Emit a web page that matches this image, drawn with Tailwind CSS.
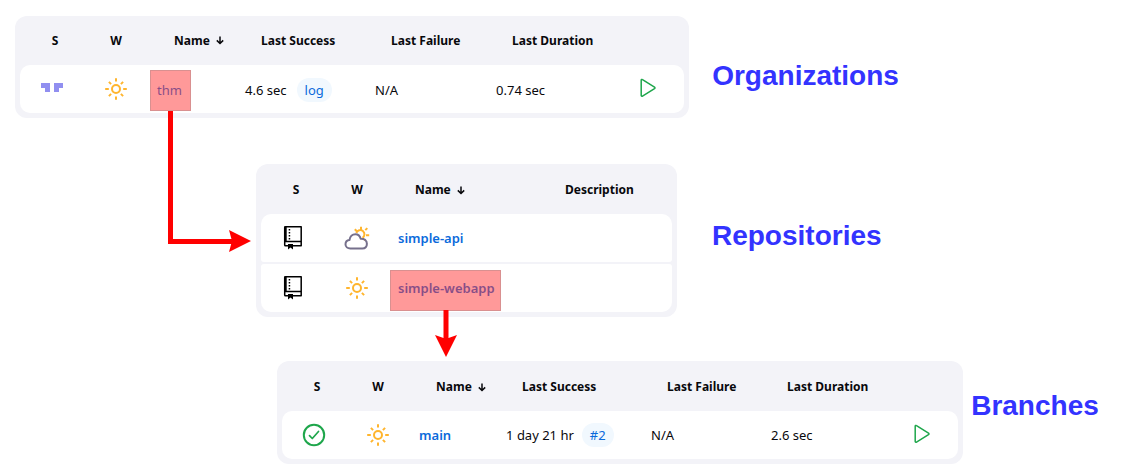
<!DOCTYPE html>
<html lang="en">
<head>
<meta charset="utf-8">
<title>Organizations, repositories and branches</title>
<script src="https://cdn.jsdelivr.net/npm/@tailwindcss/browser@4"></script>
</head>
<body class="bg-white font-['Noto_Sans',sans-serif] text-[13px] leading-5 text-[#08080c]">
<svg class="hidden" aria-hidden="true">
  <symbol id="sun" viewBox="0 0 24 24">
    <g fill="none" stroke="#ffb52e" stroke-width="2">
      <circle cx="12" cy="12" r="4"/>
      <path d="M12 1.2v3.3M12 19.5v3.3M1.2 12h3.6M19.2 12h3.6M4.9 4.9l2.2 2.2M16.9 16.9l2.2 2.2M19.1 4.9l-2.2 2.2M7.1 16.9l-2.2 2.2"/>
    </g>
  </symbol>
  <symbol id="cloud-sun" viewBox="0 0 26 24">
    <g fill="none" stroke-width="2">
      <path stroke="#ffb52e" d="M12.3 6.8a4.2 4.2 0 1 1 6.2 5M17 .8v3M21.3 4.1l2-2M22 9.3h3.2M10.8 3.2l1.8 1.8M21.3 14.2l-.8-.8"/>
      <path stroke="#76708c" stroke-linejoin="round" d="M6.3 22.500C3.500 22.500 1.500 20.600 1.500 18.300c0-2.300 1.700-3.900 4-4.200.4-3.600 2.900-5.900 5.900-5.900 2.700 0 4.600 1.800 5.300 4.600 3.800-.2 6.200 1.900 6.200 4.900 0 2.900-1.900 4.800-4.600 4.800z"/>
    </g>
  </symbol>
  <symbol id="repo" viewBox="0 0 20 26">
    <path fill="none" stroke="#000" stroke-width="1.500" stroke-linejoin="round" d="M2.500 1.700h15.700v19H2.500a.8.8 0 0 1-.8-.8V2.500a.8.8 0 0 1 .8-.8zM2 16.500h16.200"/>
    <path d="M1 1.500h2.700V17H1zM5.700 4h1.500v1.500H5.700zM5.700 7h1.500v1.500H5.700zM5.700 10h1.500v1.500H5.700zM5.700 13h1.500v1.500H5.700zM5 19h5v5.500L7.500 22.500 5 24.500z"/>
  </symbol>
  <symbol id="play" viewBox="0 0 16 20">
    <path fill="none" stroke="#1ea64b" stroke-width="1.500" stroke-linejoin="round" d="M1.200 2.200v15.200c0 .7.700 1.100 1.300.7l12-7.500c.6-.4.6-1 0-1.400l-12-7.600c-.6-.4-1.300 0-1.300.6z"/>
  </symbol>
  <symbol id="down" viewBox="0 0 8 9">
    <path fill="none" stroke="currentColor" stroke-width="1.500" d="M4 .5v7M.8 4.400L4 7.500l3.200-3.100"/>
  </symbol>
</svg>

<main class="relative flex min-w-[1040px] flex-col pt-4 pb-2">

  <section class="mb-[46px] flex items-start pl-[1.34%]">
    <div class="w-[60.9%] rounded-xl bg-[#f3f3f8] px-[5px] pb-[3px]">
      <table class="w-full table-fixed border-separate border-spacing-x-0 border-spacing-y-[2px] text-left">
        <colgroup><col class="w-[9.64%]"><col class="w-[9.64%]"><col class="w-[13.25%]"><col class="w-[19.58%]"><col class="w-[18.22%]"><col class="w-[18.83%]"><col class="w-[10.84%]"></colgroup>
        <thead>
          <tr class="h-[45px] text-xs">
            <th class="pl-[6px] text-center">S</th><th class="text-center">W</th>
            <th class="pl-[26px]"><button type="button" class="flex items-center gap-[6px]">Name <svg class="h-[9px] w-2"><use href="#down"/></svg></button></th>
            <th class="pl-[25px]">Last Success</th><th class="pl-[25px]">Last Failure</th><th class="pl-[25px]">Last Duration</th><th></th>
          </tr>
        </thead>
        <tbody>
          <tr class="h-12 *:bg-white">
            <td class="rounded-l-[10px]"><svg class="mx-auto mb-1 h-[9px] w-[22px]" viewBox="0 0 22 9" fill="#918ff0"><path d="M0 0h9v9H4V5H0zM13 0h9v5h-4v4h-5z"/></svg></td>
            <td><svg class="mx-auto size-6"><use href="#sun"/></svg></td>
            <td class="pt-[2px] pl-[9px]"><a href="#thm" class="relative inline-block text-[#0b6adb]">thm<span class="absolute -top-[10px] -right-[9px] -bottom-[11px] -left-[7px] border border-[#d99090] bg-[#ff3333]/50"></span></a></td>
            <td class="pt-[2px] pl-[9px]"><div class="flex items-center gap-[10px]">4.6 sec <a href="#log" class="rounded-full bg-[#f1f8fe] px-2 py-[2px] text-[#0b6adb]">log</a></div></td>
            <td class="pt-[2px] pl-[9px]">N/A</td>
            <td class="pt-[2px] pl-[9px]">0.74 sec</td>
            <td class="rounded-r-[10px]"><button type="button" aria-label="Build" class="mx-auto mb-[2px] block"><svg class="h-5 w-4"><use href="#play"/></svg></button></td>
          </tr>
        </tbody>
      </table>
    </div>
    <h2 class="mt-11 ml-[2.08%] font-['Liberation_Sans',sans-serif] text-[28px] leading-8 font-bold text-[#3333ff]">Organizations</h2>
  </section>

  <section class="mb-11 flex items-start pl-[22.82%]">
    <div class="w-[48.61%] rounded-xl bg-[#f3f3f8] px-[5px] pb-[3px]">
      <table class="w-full table-fixed border-separate border-spacing-x-0 border-spacing-y-[2px] text-left">
        <colgroup><col class="w-[15.57%]"><col class="w-[15.57%]"><col class="w-[36.5%]"><col class="w-[32.36%]"></colgroup>
        <thead>
          <tr class="h-[46px] text-xs *:pt-[2px]">
            <th class="pl-[6px] text-center">S</th><th class="text-center">W</th>
            <th class="pl-[26px]"><button type="button" class="flex items-center gap-[6px]">Name <svg class="h-[9px] w-2"><use href="#down"/></svg></button></th>
            <th class="pl-[26px]">Description</th>
          </tr>
        </thead>
        <tbody class="font-semibold">
          <tr class="h-12 *:bg-white">
            <td class="rounded-tl-[10px] rounded-bl-[3px]"><svg class="mx-auto h-[26px] w-5"><use href="#repo"/></svg></td>
            <td><svg class="mx-auto h-6 w-[26px]"><use href="#cloud-sun"/></svg></td>
            <td class="pl-[9px]"><a href="#simple-api" class="text-[#0b6adb]">simple-api</a></td>
            <td class="rounded-tr-[10px] rounded-br-[3px]"></td>
          </tr>
          <tr class="h-12 *:bg-white">
            <td class="rounded-tl-[3px] rounded-bl-[10px]"><svg class="mx-auto h-[26px] w-5"><use href="#repo"/></svg></td>
            <td><svg class="mx-auto size-6"><use href="#sun"/></svg></td>
            <td class="pl-[9px]"><a href="#simple-webapp" class="relative inline-block text-[#0b6adb]">simple-webapp<span class="absolute -top-[8px] -right-[6px] -bottom-[13px] -left-[8px] border border-[#d99090] bg-[#ff3333]/50"></span><svg class="absolute top-8 left-1/2 h-[47px] w-[22px] -translate-x-1/2" viewBox="0 0 22 47" fill="#f00"><path d="M8.500 0h5v28L22 25 11 47 0 25l8.500 3z"/></svg></a></td>
            <td class="rounded-tr-[3px] rounded-br-[10px]"></td>
          </tr>
        </tbody>
      </table>
    </div>
    <h2 class="mt-14 ml-[4.04%] font-['Liberation_Sans',sans-serif] text-[28px] leading-8 font-bold text-[#3333ff]">Repositories</h2>
  </section>

  <section class="flex items-start pl-[24.69%]">
    <div class="w-[81.2%] rounded-xl bg-[#f3f3f8] px-[5px] pb-[3px]">
      <table class="w-full table-fixed border-separate border-spacing-x-0 border-spacing-y-[2px] text-left">
        <colgroup><col class="w-[9.47%]"><col class="w-[9.47%]"><col class="w-[12.87%]"><col class="w-[21.45%]"><col class="w-[17.75%]"><col class="w-[18.34%]"><col class="w-[10.65%]"></colgroup>
        <thead>
          <tr class="h-[46px] text-xs *:pt-[2px]">
            <th class="pl-[6px] text-center">S</th><th class="text-center">W</th>
            <th class="pl-[26px]"><button type="button" class="flex items-center gap-[6px]">Name <svg class="h-[9px] w-2"><use href="#down"/></svg></button></th>
            <th class="pl-[25px]">Last Success</th><th class="pl-[25px]">Last Failure</th><th class="pl-[25px]">Last Duration</th><th></th>
          </tr>
        </thead>
        <tbody>
          <tr class="h-12 *:bg-white">
            <td class="rounded-l-[10px]"><svg class="mx-auto size-6" viewBox="0 0 24 24" fill="none" stroke="#1ea64b" stroke-width="2"><circle cx="12" cy="12" r="10.200"/><path stroke-linecap="round" stroke-linejoin="round" stroke-width="1.700" d="M7.500 12.600l2.800 2.900 6.200-7"/></svg></td>
            <td><svg class="mx-auto size-6"><use href="#sun"/></svg></td>
            <td class="pl-[9px]"><a href="#main" class="font-semibold text-[#0b6adb]">main</a></td>
            <td class="pl-[9px]"><div class="flex items-center gap-2">1 day 21 hr <a href="#2" class="rounded-full bg-[#f1f8fe] px-2 py-[2px] text-[#0b6adb]">#2</a></div></td>
            <td class="pl-[9px]">N/A</td>
            <td class="pl-[9px]">2.6 sec</td>
            <td class="rounded-r-[10px]"><button type="button" aria-label="Build" class="mx-auto mb-[2px] block"><svg class="h-5 w-4"><use href="#play"/></svg></button></td>
          </tr>
        </tbody>
      </table>
    </div>
    <h2 class="mt-[29px] ml-[0.95%] font-['Liberation_Sans',sans-serif] text-[28px] leading-8 font-bold text-[#3333ff]">Branches</h2>
  </section>

  <!-- Connector from the organization to its repositories -->
  <div class="absolute top-[111px] left-[14.97%] h-[133px] w-[7.4%]">
    <div class="mr-4 h-full border-b-[5px] border-l-[5px] border-[#ff0000]"></div>
    <svg class="absolute right-0 -bottom-2 h-[22px] w-[22px]" viewBox="0 0 22 22" fill="#f00"><path d="M0 0l22 11L0 22l3-11z"/></svg>
  </div>
</main>
</body>
</html>
